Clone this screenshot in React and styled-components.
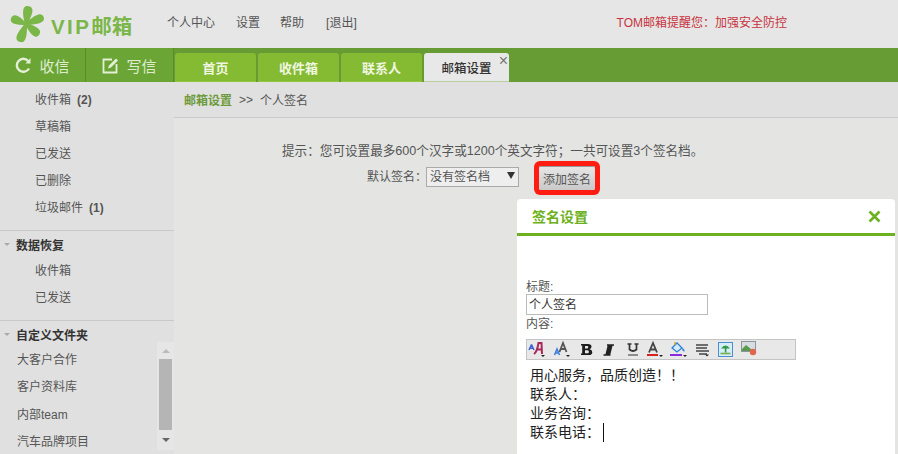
import React from 'react';
import styled, { createGlobalStyle } from 'styled-components';

const GlobalStyle = createGlobalStyle`
  html, body {
    margin: 0;
    padding: 0;
    height: 100%;
    overflow: hidden;
    background: #e4e5e3;
    font-family: "Liberation Sans", "Noto Sans CJK SC", sans-serif;
    font-size: 12px;
    color: #555;
  }
`;

const Page = styled.div`
  width: 898px;
  height: 454px;
  overflow: hidden;
  display: flex;
  flex-direction: column;
`;

// Cabecera
const Header = styled.header`
  height: 48px;
  flex: none;
  background: #e6e6e6;
  display: flex;
  align-items: center;
`;

const Logo = styled.div`
  width: 167px;
  flex: none;
  display: flex;
  align-items: center;
  padding-left: 10px;
  box-sizing: border-box;
  height: 48px;
`;

const LogoText = styled.span`
  margin-left: 5px;
  margin-top: 2px;
  font-size: 20.5px;
  font-weight: 700;
  color: #7ab648;
  white-space: nowrap;
`;

const LogoLatin = styled.span`
  letter-spacing: 2.4px;
`;

const TopLinks = styled.div`
  display: flex;
  margin-bottom: 6px;
`;

const TopLink = styled.a`
  margin-right: ${({ $gap }) => $gap}px;
  color: #555;
  font-size: 12px;
  white-space: nowrap;
`;

const Notice = styled.div`
  margin-left: auto;
  margin-right: 111px;
  margin-bottom: 6px;
  font-size: 12px;
  color: #c8333d;
`;

// Barra verde
const NavBar = styled.nav`
  height: 34px;
  flex: none;
  background: #669c33;
  display: flex;
  align-items: stretch;
`;

const ActionButton = styled.div`
  width: ${({ $w }) => $w}px;
  flex: none;
  box-sizing: border-box;
  border-right: 1px solid #5a8c2b;
  background: #6ba536;
  color: #dfeccf;
  font-size: 15px;
  display: flex;
  align-items: center;
  justify-content: center;
  gap: 7px;
`;

const Tabs = styled.div`
  display: flex;
  align-items: flex-end;
  gap: 1px;
  margin-left: 1px;
`;

const Tab = styled.div`
  position: relative;
  width: ${({ $w }) => $w}px;
  height: 29px;
  box-sizing: border-box;
  margin-right: 1px;
  border-radius: 3px 3px 0 0;
  background: ${({ $active }) => ($active ? '#e8e8e8' : '#85bb33')};
  border-bottom: 1px solid ${({ $active }) => ($active ? '#b9cfa0' : '#93c53f')};
  color: ${({ $active }) => ($active ? '#333' : '#f0f6e0')};
  font-size: ${({ $active }) => ($active ? 12.5 : 13)}px;
  font-weight: ${({ $active }) => ($active ? 500 : 700)};
  display: flex;
  align-items: center;
  justify-content: center;
`;

const TabClose = styled.span`
  position: absolute;
  right: 1px;
  top: 0;
  font-size: 16px;
  line-height: 15px;
  color: #777;
`;

const Body = styled.div`
  flex: 1;
  display: flex;
  min-height: 0;
`;

// Barra lateral
const Sidebar = styled.aside`
  width: 174px;
  flex: none;
  background: #e0e0e0;
  overflow: hidden;
`;

const SideGroup = styled.div`
  padding-top: ${({ $pt }) => $pt ?? 0}px;
  padding-bottom: ${({ $pb }) => $pb ?? 0}px;
  border-bottom: ${({ $line }) => ($line ? '1px solid #c9c9c9' : 'none')};
`;

const SideItem = styled.div`
  height: ${({ $flat }) => ($flat ? 27.4 : 27)}px;
  line-height: 27px;
  padding-left: ${({ $flat }) => ($flat ? 17 : 35)}px;
  color: #555;
  white-space: nowrap;
`;

const Count = styled.b`
  margin-left: 6px;
  color: #555;
`;

const SideTitle = styled.div`
  height: 25px;
  margin-bottom: ${({ $mb }) => $mb ?? 0}px;
  display: flex;
  align-items: center;
  gap: 6px;
  padding: 2px 0 0 4px;
  box-sizing: border-box;
  font-weight: 700;
  color: #333;
`;

const Caret = styled.i`
  width: 0;
  height: 0;
  border-left: 3px solid transparent;
  border-right: 3px solid transparent;
  border-top: 3px solid #aaa;
`;

const FolderList = styled.div`
  display: flex;
  justify-content: space-between;
  margin-top: 1px;
`;

const Scrollbar = styled.div`
  width: 17px;
  height: 108px;
  margin-top: -5px;
  padding-left: 2px;
  box-sizing: border-box;
  padding-right: 2px;
  background: #e6e6e6;
  display: flex;
  flex-direction: column;
`;

const ScrollArrow = styled.div`
  height: ${({ $up }) => ($up ? 17 : 20)}px;
  flex: none;
  display: flex;
  align-items: center;
  justify-content: center;
  &::before {
    content: '';
    border-left: 4px solid transparent;
    border-right: 4px solid transparent;
    ${({ $up }) => ($up ? 'border-bottom' : 'border-top')}: 4px solid ${({ $up }) => ($up ? '#bbb' : '#666')};
  }
`;

const ScrollThumb = styled.div`
  flex: 1;
  background: #b5b5b5;
`;

// Contenido
const Main = styled.main`
  position: relative;
  flex: 1;
  background: #e4e5e3;
  min-width: 0;
`;

const Breadcrumb = styled.div`
  height: 36px;
  box-sizing: border-box;
  background: #e0e0e0;
  border-bottom: 1px solid #cbcbcb;
  padding: 0 0 0 10px;
  display: flex;
  align-items: center;
  gap: 7px;
  color: #555;
`;

const CrumbLink = styled.a`
  color: #6d9a3a;
  font-weight: 700;
`;

const Hint = styled.p`
  margin: 0;
  padding: 24px 0 0 108px;
  font-size: 12.6px;
  line-height: 18px;
  color: #555;
`;

const SignatureRow = styled.div`
  display: flex;
  align-items: flex-start;
  margin: 6px 0 0 193px;
  line-height: 22px;
  color: #555;
`;

const FakeSelect = styled.div`
  width: 93px;
  height: 20px;
  margin: 1px 0 0 -1px;
  box-sizing: border-box;
  border: 1px solid #aaa;
  background: #eee;
  padding-left: 3px;
  display: flex;
  align-items: center;
  justify-content: space-between;
  font-size: 12px;
  color: #555;
`;

const SelectArrow = styled.i`
  margin-right: 3px;
  border-left: 4px solid transparent;
  border-right: 4px solid transparent;
  border-top: 7px solid #333;
  margin-top: -3px;
`;

const AddButton = styled.button`
  margin-left: 20px;
  width: 56px;
  height: 24px;
  padding: 0;
  border: none;
  border-top: 1px solid #999;
  background: linear-gradient(#e6e6e6, #c9c9c9);
  box-shadow: 0 0 0 5px #ff1d12;
  border-radius: 2px;
  font-family: inherit;
  font-size: 12px;
  color: #555;
`;

const Dialog = styled.section`
  position: absolute;
  left: 343px;
  top: 117px;
  width: 378px;
  height: 300px;
  background: #fff;
  border-radius: 4px 4px 0 0;
`;

const DialogHead = styled.div`
  height: 34px;
  border-bottom: 3px solid #6eb120;
  padding: 0 14px 0 15px;
  display: flex;
  align-items: center;
  justify-content: space-between;
`;

const DialogTitle = styled.h3`
  margin: 0;
  font-size: 14px;
  font-weight: 700;
  color: #6eb120;
`;

const DialogBody = styled.div`
  padding: 44px 0 0 9px;
`;

const FieldLabel = styled.div`
  font-size: 12px;
  line-height: 14px;
  color: #555;
`;

const TitleInput = styled.div`
  width: 182px;
  height: 21px;
  margin-bottom: 2px;
  box-sizing: border-box;
  border: 1px solid #bbb;
  padding-left: 2px;
  line-height: 21px;
  font-size: 12px;
  color: #333;
`;

const Toolbar = styled.div`
  width: 270px;
  height: 21px;
  margin-top: 8px;
  box-sizing: border-box;
  border: 1px solid #c4c4c4;
  background: #e8e8e8;
  display: flex;
  align-items: center;
  padding-left: 1px;
`;

const ToolIcon = styled.svg`
  width: 18px;
  height: 17px;
  margin-right: ${({ $mr }) => $mr}px;
  flex: none;
`;

const Editor = styled.div`
  padding: 6px 0 0 4px;
  font-size: 14px;
  line-height: 19px;
  color: #222;
`;

const Cursor = styled.span`
  display: inline-block;
  width: 1px;
  height: 19px;
  background: #111;
  margin-left: 3px;
  vertical-align: top;
`;

const PETALS = [
  { angle: 8, len: 18, w: 8 },
  { angle: 68, len: 19, w: 7.5 },
  { angle: 130, len: 17, w: 7.5 },
  { angle: 200, len: 19, w: 8 },
  { angle: 292, len: 16, w: 7.5 },
];

const LogoMark = () => (
  <svg width="36" height="38" viewBox="0 0 36 38">
    <g fill="#7ab648" transform="translate(16 19)">
      {PETALS.map(({ angle, len, w }) => (
        <path
          key={angle}
          d={`M0 3 C${-w * 0.5} ${-len * 0.4} ${-w} ${-len} 0 ${-len} C${w} ${-len} ${w * 0.5} ${-len * 0.4} 0 3 Z`}
          transform={`rotate(${angle})`}
        />
      ))}
    </g>
  </svg>
);

const RefreshIcon = () => (
  <svg width="17" height="17" viewBox="0 0 17 17" fill="none" stroke="#e4efd6" strokeWidth="2.4">
    <path d="M14 11.5 A6.5 6.5 0 1 1 13.2 4" />
    <path d="M15.5 1 V6.5 H10.5 Z" fill="#e4efd6" stroke="none" />
  </svg>
);

const ComposeIcon = () => (
  <svg width="17" height="17" viewBox="0 0 17 17" fill="none" stroke="#e4efd6" strokeWidth="1.8">
    <path d="M10 2.5 H1.5 V15.5 H14.5 V7" />
    <path d="M6 11.5 L7 8.5 L14 1.5 L16 3.5 L9 10.5 Z" fill="#e4efd6" stroke="none" />
  </svg>
);

const CloseGlyph = () => (
  <svg width="13" height="13" viewBox="0 0 13 13" stroke="#6eb120" strokeWidth="2.6" fill="none">
    <path d="M1.5 1.5 L11.5 11.5 M11.5 1.5 L1.5 11.5" />
  </svg>
);

const ToolGlyph = ({ children, mr }) => (
  <ToolIcon viewBox="0 0 18 17" $mr={mr}>{children}</ToolIcon>
);

const Drop = ({ x = 13 }) => <path d={`M${x} 14 h4 l-2 2 Z`} fill="#222" />;

const EditorTools = () => (
  <>
    <ToolGlyph mr={7}>
      <path d="M3.5 3.5 L1 9 M3.5 3.5 L6 9 M2 7.2 H5" stroke="#3f5fd0" strokeWidth="1.5" fill="none" />
      <path d="M6 13 Q9 11 10.5 2 H13.5 L14 13 M8.5 8.5 H14" stroke="#a8285c" strokeWidth="2" fill="none" />
      <Drop />
    </ToolGlyph>
    <ToolGlyph mr={6}>
      <path d="M1.5 14 L4 8 L6.5 14 M2.5 12 H5.5" stroke="#3f7fe0" strokeWidth="1.6" fill="none" />
      <path d="M6.5 11 L10 2 L13.5 11 M8 8 H12" stroke="#555" strokeWidth="1.8" fill="none" />
      <Drop />
    </ToolGlyph>
    <ToolGlyph mr={4}>
      <path d="M4 3 h7 q3.5 0 3.5 2.8 q0 1.8 -2 2.4 q2.8 .6 2.8 3 q0 2.8 -3.5 2.8 h-7.8 v-1.5 h1.2 v-8 h-1.2 Z M8 5 v2.5 h2 q1.3 0 1.3 -1.3 t-1.3 -1.2 Z M8 9.2 v3 h2.6 q1.3 0 1.3 -1.5 t-1.3 -1.5 Z" fill="#1c1c1c" fillRule="evenodd" />
    </ToolGlyph>
    <ToolGlyph mr={7}>
      <path d="M7 14 L9.5 4 H13 L10.5 14 Z M8 4 H15 M4.5 14 H11.5" stroke="#222" strokeWidth="1.4" fill="#222" />
    </ToolGlyph>
    <ToolGlyph mr={3}>
      <path d="M5.5 3 V8.5 Q9 11.5 12.5 8.5 V3 M3.5 3 H7.5 M10.5 3 H14.5" stroke="#333" strokeWidth="1.7" fill="none" />
      <path d="M4 14 H14" stroke="#777" strokeWidth="1.6" />
    </ToolGlyph>
    <ToolGlyph mr={6}>
      <path d="M4 11.5 L8 2 L12 11.5 M5.5 8.5 H10.5" stroke="#444" strokeWidth="1.8" fill="none" />
      <path d="M2 14 H13" stroke="#d81e1e" strokeWidth="2" />
      <Drop x={14} />
    </ToolGlyph>
    <ToolGlyph mr={7}>
      <path d="M3 7 L8 2 L13 7 L8 11 Z" fill="#d4ebfd" stroke="#2f7fd4" strokeWidth="1.3" />
      <path d="M6 1 V4" stroke="#c9a227" strokeWidth="1.4" />
      <path d="M13 7 q3 1 2.5 3.5 q-2 .5 -2.5 -3.5 Z" fill="#2f7fd4" />
      <path d="M1 14 H13" stroke="#8a2be2" strokeWidth="2" />
      <Drop x={14} />
    </ToolGlyph>
    <ToolGlyph mr={5}>
      <path d="M2 4 H14 M2 7 H13 M2 10 H15 M5 13 H13" stroke="#444" strokeWidth="1.5" />
      <path d="M11 13.5 h4 l-2 2 Z" fill="#222" />
    </ToolGlyph>
    <ToolGlyph mr={5}>
      <rect x="1.5" y="1.5" width="14" height="14" fill="#d5ecf9" stroke="#4a8fd0" />
      <path d="M4 7.5 Q8.5 1.5 13 7.5 Z M7.8 7 h1.6 v4.5 h-1.6 Z" fill="#2f9b45" />
      <path d="M3.5 12.5 H13.5" stroke="#6fb04b" strokeWidth="1.6" />
    </ToolGlyph>
    <ToolGlyph mr={0}>
      <rect x="1.5" y="0.5" width="14" height="10" fill="#d8dde0" stroke="#8a959c" />
      <path d="M2 8 L6 4 L11 8 L11 10 H2 Z" fill="#5b9a4e" />
      <circle cx="13" cy="11" r="3.2" fill="#e0654f" />
    </ToolGlyph>
  </>
);

const App = () => (
  <Page>
    <GlobalStyle />

    <Header>
      <Logo>
        <LogoMark />
        <LogoText><LogoLatin>VIP</LogoLatin>邮箱</LogoText>
      </Logo>
      <TopLinks>
        <TopLink $gap={21}>个人中心</TopLink>
        <TopLink $gap={20}>设置</TopLink>
        <TopLink $gap={22}>帮助</TopLink>
        <TopLink $gap={0}>[退出]</TopLink>
      </TopLinks>
      <Notice>TOM邮箱提醒您：加强安全防控</Notice>
    </Header>

    <NavBar>
      <ActionButton $w={86}><RefreshIcon />收信</ActionButton>
      <ActionButton $w={88}><ComposeIcon />写信</ActionButton>
      <Tabs>
        <Tab $w={81}>首页</Tab>
        <Tab $w={81}>收件箱</Tab>
        <Tab $w={81}>联系人</Tab>
        <Tab $w={85} $active>邮箱设置<TabClose>×</TabClose></Tab>
      </Tabs>
    </NavBar>

    <Body>
      <Sidebar>
        <SideGroup $line $pt={5} $pb={8}>
          <SideItem>收件箱<Count>(2)</Count></SideItem>
          <SideItem>草稿箱</SideItem>
          <SideItem>已发送</SideItem>
          <SideItem>已删除</SideItem>
          <SideItem>垃圾邮件<Count>(1)</Count></SideItem>
        </SideGroup>
        <SideGroup $line $pb={8}>
          <SideTitle $mb={2}><Caret />数据恢复</SideTitle>
          <SideItem>收件箱</SideItem>
          <SideItem>已发送</SideItem>
        </SideGroup>
        <SideTitle><Caret />自定义文件夹</SideTitle>
        <FolderList>
          <div>
            <SideItem $flat>大客户合作</SideItem>
            <SideItem $flat>客户资料库</SideItem>
            <SideItem $flat>内部team</SideItem>
            <SideItem $flat>汽车品牌项目</SideItem>
          </div>
          <Scrollbar>
            <ScrollArrow $up />
            <ScrollThumb />
            <ScrollArrow />
          </Scrollbar>
        </FolderList>
      </Sidebar>

      <Main>
        <Breadcrumb>
          <CrumbLink>邮箱设置</CrumbLink>
          <span>&gt;&gt;</span>
          <span>个人签名</span>
        </Breadcrumb>
        <Hint>提示：您可设置最多600个汉字或1200个英文字符；一共可设置3个签名档。</Hint>
        <SignatureRow>
          默认签名：
          <FakeSelect>没有签名档<SelectArrow /></FakeSelect>
          <AddButton>添加签名</AddButton>
        </SignatureRow>

        <Dialog>
          <DialogHead>
            <DialogTitle>签名设置</DialogTitle>
            <CloseGlyph />
          </DialogHead>
          <DialogBody>
            <FieldLabel>标题:</FieldLabel>
            <TitleInput>个人签名</TitleInput>
            <FieldLabel>内容:</FieldLabel>
            <Toolbar><EditorTools /></Toolbar>
            <Editor>
              <div>用心服务，品质创造！！</div>
              <div>联系人：</div>
              <div>业务咨询：</div>
              <div>联系电话：<Cursor /></div>
            </Editor>
          </DialogBody>
        </Dialog>
      </Main>
    </Body>
  </Page>
);

export default App;
